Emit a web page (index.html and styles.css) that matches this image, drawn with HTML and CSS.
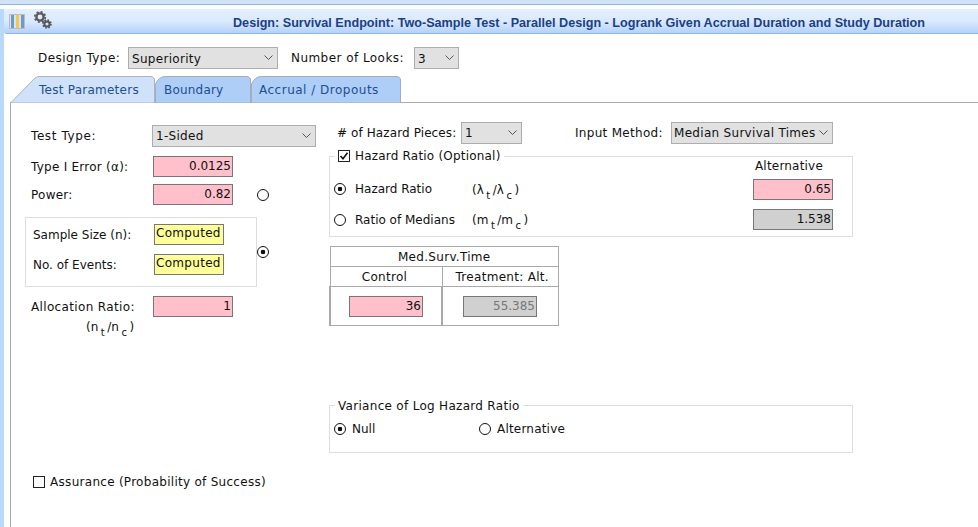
FILE: index.html
```html
<!DOCTYPE html>
<html lang="en">
<head>
    <meta charset="UTF-8">
    <title>Design: Survival Endpoint</title>
    <link rel="stylesheet" href="styles.css">
</head>
<body>
    <div class="top-strip"></div>
    <div class="page">
        <div class="title-bar">
            <svg class="icon-pause" width="17" height="15" viewBox="0 0 17 15">
                <rect x="0.5" y="0.5" width="15" height="14" fill="#dfe3e8" stroke="#b9bdc3"/>
                <rect x="2" y="1" width="3" height="13" fill="#6c9bd2"/>
                <rect x="7" y="1" width="3" height="13" fill="#f0c955"/>
                <rect x="12" y="1" width="3" height="13" fill="#6c9bd2"/>
            </svg>
            <svg class="icon-gears" width="18" height="18" viewBox="0 0 18 18">
                <circle cx="6" cy="6" r="3.6" fill="none" stroke="#5c5c5c" stroke-width="2.4"/>
                <circle cx="6" cy="6" r="5.2" fill="none" stroke="#5c5c5c" stroke-width="1.8" stroke-dasharray="2 2.08"/>
                <circle cx="13" cy="13" r="2.6" fill="none" stroke="#555" stroke-width="2"/>
                <circle cx="13" cy="13" r="4" fill="none" stroke="#555" stroke-width="1.6" stroke-dasharray="1.6 1.54"/>
            </svg>
            <span class="title-text">Design: Survival Endpoint: Two-Sample Test - Parallel Design - Logrank Given Accrual Duration and Study Duration</span>
        </div>

        <div class="design-row">
            <label class="design-label">Design Type:</label>
            <select class="select select-design"><option>Superiority</option></select>
            <label class="looks-label">Number of Looks:</label>
            <select class="select select-looks"><option>3</option></select>
        </div>

        <div class="tabs">
            <div class="tab tab-active">
                <svg class="tab-shape" width="145" height="27" viewBox="0 0 145 27">
                    <path d="M0.5 27 L25 2 Q27 0.5 29 0.5 L140 0.5 Q144.5 0.5 144.5 4 L144.5 27 Z" fill="#d0e2fa" stroke="#aab4c2"/>
                </svg>
                <span class="tab-text">Test Parameters</span>
            </div>
            <div class="tab tab-boundary">
                <svg class="tab-shape" width="96" height="27" viewBox="0 0 96 27">
                    <path d="M0.5 27 L0.5 8 Q4 0.5 10 0.5 L91 0.5 Q95.5 0.5 95.5 4 L95.5 27 Z" fill="#aecdf7" stroke="#a3aebd"/>
                </svg>
                <span class="tab-text">Boundary</span>
            </div>
            <div class="tab tab-accrual">
                <svg class="tab-shape" width="150" height="27" viewBox="0 0 150 27">
                    <path d="M0.5 27 L0.5 8 Q4 0.5 10 0.5 L145 0.5 Q149.5 0.5 149.5 4 L149.5 27 Z" fill="#aecdf7" stroke="#a3aebd"/>
                </svg>
                <span class="tab-text">Accrual / Dropouts</span>
            </div>
        </div>

        <div class="panel">
            <div class="columns">
                <div class="left-col">
                    <div class="field field-type">
                        <label class="field-label">Test Type:</label>
                        <select class="select select-test"><option>1-Sided</option></select>
                    </div>
                    <div class="field field-error">
                        <label class="field-label">Type I Error (&alpha;):</label>
                        <input class="num pink" type="text" value="0.0125">
                    </div>
                    <div class="field field-power">
                        <label class="field-label">Power:</label>
                        <input class="num pink" type="text" value="0.82">
                        <input class="radio radio-power" type="radio" name="solve">
                    </div>
                    <div class="computed-row">
                        <div class="computed-box">
                            <div class="computed-line">
                                <label class="computed-label">Sample Size (n):</label>
                                <input class="computed" type="text" value="Computed">
                            </div>
                            <div class="computed-line">
                                <label class="computed-label">No. of Events:</label>
                                <input class="computed" type="text" value="Computed">
                            </div>
                        </div>
                        <input class="radio" type="radio" name="solve" checked>
                    </div>
                    <div class="field field-alloc">
                        <label class="field-label">Allocation Ratio:</label>
                        <input class="num pink" type="text" value="1">
                    </div>
                    <div class="alloc-note">(n<sub>t</sub>/n<sub>c</sub>)</div>
                </div>

                <div class="right-col">
                    <div class="hazard-top">
                        <label class="pieces-label"># of Hazard Pieces:</label>
                        <select class="select select-pieces"><option>1</option></select>
                        <label class="method-label">Input Method:</label>
                        <select class="select select-method"><option>Median Survival Times</option></select>
                    </div>

                    <fieldset class="group group-hazard">
                        <legend class="group-legend hazard-legend">
                            <svg class="check-icon" width="12" height="12" viewBox="0 0 12 12">
                                <rect x="0.5" y="0.5" width="11" height="11" fill="#fff" stroke="#222"/>
                                <path d="M2.5 6 L5 8.8 L9.5 2.8" fill="none" stroke="#111" stroke-width="1.6"/>
                            </svg>
                            Hazard Ratio (Optional)
                        </legend>
                        <div class="alt-head">Alternative</div>
                        <div class="ratio-row ratio-hazard">
                            <input class="radio" type="radio" name="ratio" checked>
                            <span class="ratio-name">Hazard Ratio</span>
                            <span class="ratio-sym">(&lambda;<sub>t</sub>/&lambda;<sub>c</sub>)</span>
                            <input class="num pink" type="text" value="0.65">
                        </div>
                        <div class="ratio-row">
                            <input class="radio" type="radio" name="ratio">
                            <span class="ratio-name">Ratio of Medians</span>
                            <span class="ratio-sym">(m<sub>t</sub>/m<sub>c</sub>)</span>
                            <input class="num gray" type="text" value="1.538">
                        </div>
                    </fieldset>

                    <table class="surv-table">
                        <colgroup>
                            <col class="col-control">
                            <col class="col-treatment">
                        </colgroup>
                        <tr><th colspan="2">Med.Surv.Time</th></tr>
                        <tr><th class="head-control">Control</th><th class="head-treatment">Treatment: Alt.</th></tr>
                        <tr>
                            <td class="cell-control"><input class="num-small pink" type="text" value="36"></td>
                            <td class="cell-treatment"><input class="num-small gray muted" type="text" value="55.385"></td>
                        </tr>
                    </table>

                    <fieldset class="group group-variance">
                        <legend class="group-legend variance-legend">Variance of Log Hazard Ratio</legend>
                        <div class="variance-row">
                            <input class="radio" type="radio" name="variance" checked>
                            <span class="variance-null">Null</span>
                            <input class="radio" type="radio" name="variance">
                            <span class="variance-alt">Alternative</span>
                        </div>
                    </fieldset>
                </div>
            </div>

            <div class="assurance">
                <svg class="assurance-box" width="12" height="12" viewBox="0 0 12 12">
                    <rect x="0.5" y="0.5" width="11" height="11" fill="#fff" stroke="#222"/>
                </svg>
                Assurance (Probability of Success)
            </div>
        </div>
    </div>
</body>
</html>
```

FILE: styles.css
```css
body {
    font-family: "DejaVu Sans", Verdana, sans-serif;
    font-size: 12px;
    color: #111;
    background-color: #fff;
    margin: 0;
    height: 527px;
    overflow: hidden;
}

.top-strip {
    height: 4px;
    background-color: #cfe2f6;
    border-bottom: 1px solid #8fb4d8;
}

.page {
    border-left: 4px solid #b9d9fb;
    height: 522px;
}

/* title bar */
.title-bar {
    display: flex;
    align-items: center;
    height: 25px;
    margin-top: 4px;
    padding-right: 53px;
    border-radius: 3px 0 0 3px;
    background: linear-gradient(#e2efff, #dbeafe 50%, #b4d2fa);
    border-bottom: 1px solid #8fb4ea;
    box-sizing: border-box;
}

.icon-pause {
    margin-left: 5px;
}

.icon-gears {
    margin-left: 8px;
    margin-top: -2px;
}

.title-text {
    margin-left: auto;
    padding-top: 3px;
    font-family: "Liberation Sans", Arial, sans-serif;
    font-size: 12.62px;
    font-weight: bold;
    color: #1c3f86;
    white-space: nowrap;
}

/* design type row */
.design-row {
    display: flex;
    align-items: center;
    height: 22px;
    margin-top: 13px;
    padding-left: 34px;
    letter-spacing: 0.45px;
}

.design-label {
    width: 90px;
}

.looks-label {
    margin-left: 13px;
    width: 123px;
}

.select {
    appearance: none;
    font-family: "DejaVu Sans", Verdana, sans-serif;
    font-size: 12px;
    letter-spacing: 0.3px;
    color: #111;
    height: 22px;
    padding: 0 0 0 3px;
    background-color: #e1e1e1;
    background-image: url("data:image/svg+xml,%3Csvg xmlns='http://www.w3.org/2000/svg' width='9' height='6'%3E%3Cpath d='M0.5 0.5 L4.5 4.5 L8.5 0.5' fill='none' stroke='%23555'/%3E%3C/svg%3E");
    background-repeat: no-repeat;
    background-position: right 4px center;
    border: 1px solid #adadad;
    border-radius: 0;
}

.select-design,
.select-looks {
    padding-top: 2px;
}

.select-design {
    width: 150px;
}

.select-looks {
    width: 45px;
}

.select-test {
    width: 164px;
    margin-left: -1px;
}

.select-pieces {
    width: 61px;
}

.select-method {
    width: 162px;
    padding-left: 2px;
}

/* tabs */
.tabs {
    display: flex;
    height: 26px;
    margin-top: 7px;
    margin-left: 6px;
}

.tab {
    position: relative;
    height: 26px;
    color: #1d4f91;
}

.tab-shape {
    position: absolute;
    left: 0;
    top: 0;
}

.tab-text {
    position: relative;
    display: block;
    line-height: 29px;
    white-space: nowrap;
}

.tab-active {
    width: 145px;
    padding-left: 29px;
    box-sizing: border-box;
    letter-spacing: 0.25px;
}

.tab-boundary {
    width: 96px;
    padding-left: 9px;
    box-sizing: border-box;
    letter-spacing: 0.2px;
}

.tab-accrual {
    width: 150px;
    padding-left: 8px;
    box-sizing: border-box;
    letter-spacing: 0.5px;
}

/* panel */
.panel {
    margin-left: 6px;
    height: 425px;
    border-top: 1px solid #aaa;
    border-left: 1px solid #aaa;
    padding-top: 19px;
}

.columns {
    display: flex;
}

.left-col {
    width: 304px;
    margin-left: 14px;
    padding-top: 3px;
}

.field {
    display: flex;
    align-items: center;
    height: 21px;
}

.field-label {
    width: 128px;
    padding-left: 6px;
    box-sizing: border-box;
    letter-spacing: 0.25px;
}

.field-type .field-label {
    letter-spacing: 0.6px;
}

.field-alloc .field-label {
    letter-spacing: 0.35px;
}

.field-error {
    margin-top: 10px;
}

.field-power {
    margin-top: 7px;
}

.field-alloc {
    margin-top: 9px;
}

.num,
.num-small,
.computed {
    font-family: "DejaVu Sans", Verdana, sans-serif;
    font-size: 12px;
    color: #111;
    height: 21px;
    padding: 0 1px 1px 2px;
    border: 1px solid #777;
    box-sizing: border-box;
    border-radius: 0;
    outline: none;
}

.num {
    width: 80px;
    text-align: right;
}

.num-small {
    width: 74px;
    text-align: right;
}

.computed {
    width: 70px;
    background-color: #ffff99;
    padding: 0 0 3px 1px;
    letter-spacing: 0.3px;
}

.pink {
    background-color: #ffc0cb;
}

.gray {
    background-color: #d0d0d0;
}

.muted {
    color: #777;
}

.radio {
    appearance: none;
    width: 12px;
    height: 12px;
    margin: 0;
    flex: none;
    border: 1px solid #111;
    border-radius: 50%;
    background-color: #fff;
    box-sizing: border-box;
}

.radio:checked {
    background: radial-gradient(circle, #111 0, #111 2px, #fff 2.6px);
}

.radio-power {
    margin-left: 24px;
    margin-top: 1px;
}

.computed-row {
    display: flex;
    align-items: center;
    margin-top: 12px;
}

.computed-box {
    width: 232px;
    height: 70px;
    padding: 6px 0 0 7px;
    border: 1px solid #ddd;
    box-sizing: border-box;
}

.computed-line {
    display: flex;
    align-items: center;
    height: 21px;
    margin-bottom: 9px;
}

.computed-label {
    width: 121px;
}

.alloc-note {
    margin-top: 2px;
    padding-left: 61px;
    line-height: 16px;
}

sub {
    font-size: 10px;
    margin: 0 2.5px;
    line-height: 0;
    vertical-align: -5px;
}

/* right column */
.right-col {
    width: 524px;
}

.hazard-top {
    display: flex;
    align-items: center;
    height: 22px;
    padding-left: 8px;
    letter-spacing: 0.3px;
}

.pieces-label {
    width: 124px;
    letter-spacing: 0.1px;
}

.method-label {
    width: 96px;
    margin-left: 53px;
}

.group {
    margin: 0;
    padding: 0;
    border: 1px solid #ddd;
    min-width: 0;
}

.group-hazard {
    margin-top: 4px;
    height: 89px;
    box-sizing: border-box;
}

.group-legend {
    margin-left: 5px;
    padding: 0 3px 0 3px;
    line-height: 16px;
}

.hazard-legend {
    letter-spacing: 0.2px;
}

.check-icon,
.assurance-box {
    vertical-align: -2px;
    margin-right: 1px;
}

.alt-head {
    height: 19px;
    margin-top: -4px;
    line-height: 13px;
    text-align: right;
    padding-right: 29px;
    letter-spacing: 0.2px;
}

.ratio-row {
    display: flex;
    align-items: center;
    height: 21px;
    margin-bottom: 9px;
    padding-left: 4px;
}

.ratio-hazard .radio,
.ratio-hazard .ratio-name {
    margin-bottom: 2px;
}

.ratio-name {
    width: 117px;
    margin-left: 9px;
}

.ratio-sym {
    width: 281px;
    flex: none;
}

.surv-table {
    margin-top: 9px;
    width: 230px;
    height: 80px;
    border-collapse: collapse;
    table-layout: fixed;
}

.col-control {
    width: 112px;
}

.surv-table th {
    font-weight: normal;
    height: 19px;
    padding: 0;
    border: 1px solid #aaa;
    letter-spacing: 0.3px;
}

.surv-table .head-control {
    padding-right: 3px;
}

.surv-table .head-treatment {
    padding-left: 4px;
}

.surv-table td {
    padding: 0;
    border: 1px solid #aaa;
    border-left-width: 2px;
}

.surv-table .cell-control {
    padding-left: 18px;
}

.surv-table .cell-treatment {
    padding-left: 20px;
}

.group-variance {
    margin-top: 70px;
    height: 57px;
    box-sizing: border-box;
}

.variance-legend {
    margin-left: 5px;
    padding-top: 2px;
    letter-spacing: 0.3px;
}

.variance-row {
    display: flex;
    align-items: center;
    height: 18px;
    margin-top: 6px;
    padding-left: 4px;
}

.variance-null {
    width: 127px;
    margin-left: 6px;
}

.variance-alt {
    margin-left: 6px;
    letter-spacing: 0.2px;
}

.assurance {
    margin-left: 22px;
    margin-top: 22px;
    letter-spacing: 0.28px;
}
```
